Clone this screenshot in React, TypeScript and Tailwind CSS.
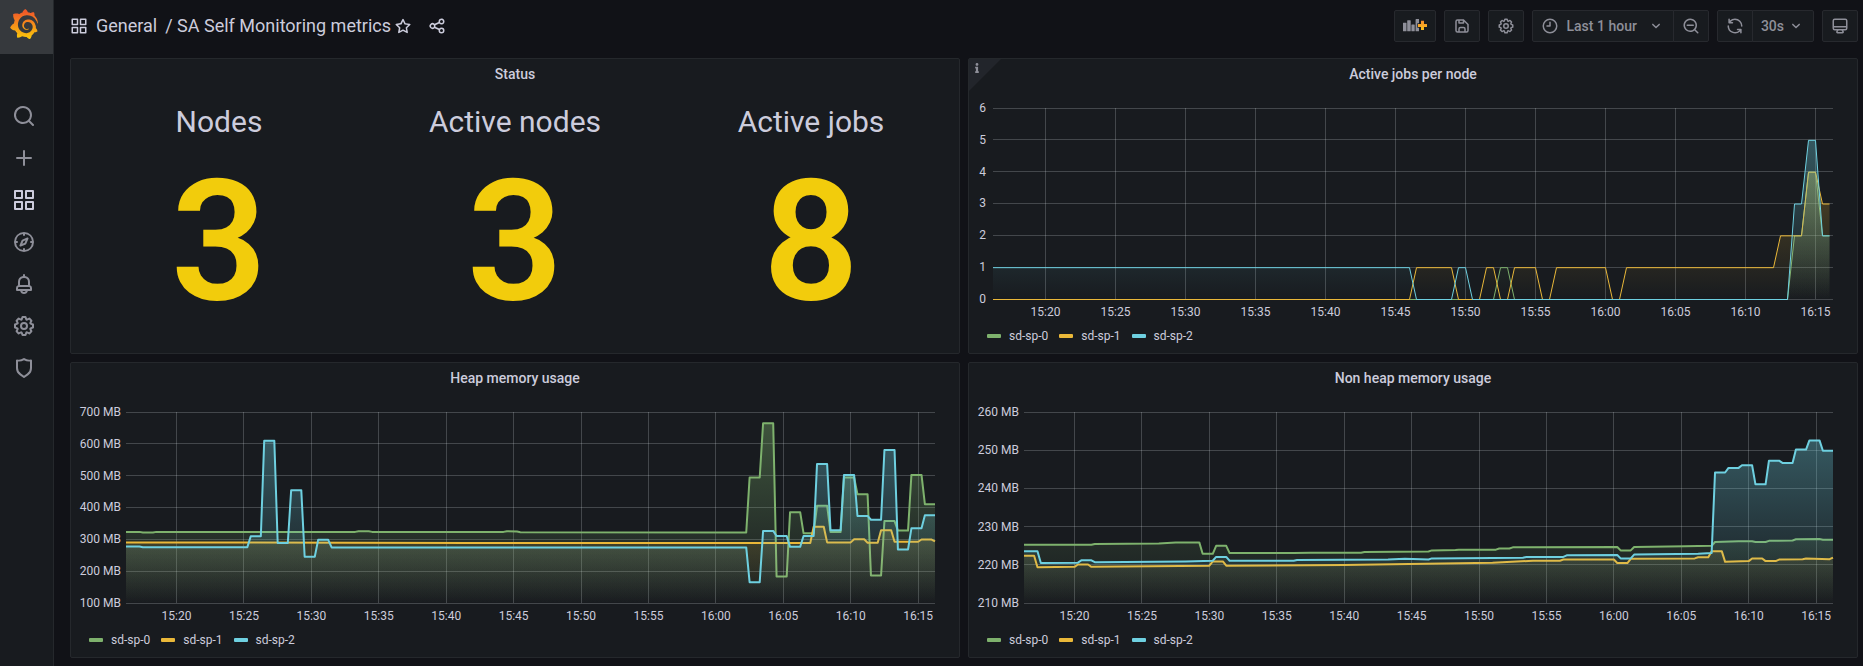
import { SiGrafana } from "react-icons/si";
import { FaInfo } from "react-icons/fa";
import type { ReactNode } from "react";

const ICONS = {
  apps: "M10,13H3a1,1,0,0,0-1,1v7a1,1,0,0,0,1,1h7a1,1,0,0,0,1-1V14A1,1,0,0,0,10,13ZM9,20H4V15H9ZM21,2H14a1,1,0,0,0-1,1v7a1,1,0,0,0,1,1h7a1,1,0,0,0,1-1V3A1,1,0,0,0,21,2ZM20,9H15V4h5Zm1,4H14a1,1,0,0,0-1,1v7a1,1,0,0,0,1,1h7a1,1,0,0,0,1-1V14A1,1,0,0,0,21,13Zm-1,7H15V15h5ZM10,2H3A1,1,0,0,0,2,3v7a1,1,0,0,0,1,1h7a1,1,0,0,0,1-1V3A1,1,0,0,0,10,2ZM9,9H4V4H9Z",
  search:
    "M21.71,20.29,18,16.61A9,9,0,1,0,16.61,18l3.68,3.68a1,1,0,0,0,1.42,0A1,1,0,0,0,21.71,20.29ZM11,18a7,7,0,1,1,7-7A7,7,0,0,1,11,18Z",
  plus: "M19,11H13V5a1,1,0,0,0-2,0v6H5a1,1,0,0,0,0,2h6v6a1,1,0,0,0,2,0V13h6a1,1,0,0,0,0-2Z",
  compass:
    "M12,2A10,10,0,1,0,22,12,10,10,0,0,0,12,2Zm1,17.93V19a1,1,0,0,0-2,0v.93A8,8,0,0,1,4.07,13H5a1,1,0,0,0,0-2H4.07A8,8,0,0,1,11,4.07V5a1,1,0,0,0,2,0V4.07A8,8,0,0,1,19.93,11H19a1,1,0,0,0,0,2h.93A8,8,0,0,1,13,19.93ZM15.14,7.55l-5,2.12a1,1,0,0,0-.52.52l-2.12,5a1,1,0,0,0,.21,1.1,1,1,0,0,0,.7.3.93.93,0,0,0,.4-.09l5-2.12a1,1,0,0,0,.52-.52l2.12-5a1,1,0,0,0-1.31-1.31Zm-2.49,5.1-2.28,1,1-2.28,2.28-1Z",
  bell: "M18,13.18V10a6,6,0,0,0-5-5.91V3a1,1,0,0,0-2,0V4.09A6,6,0,0,0,6,10v3.18A3,3,0,0,0,4,16v2a1,1,0,0,0,1,1H8.14a4,4,0,0,0,7.72,0H19a1,1,0,0,0,1-1V16A3,3,0,0,0,18,13.18ZM8,10a4,4,0,0,1,8,0v3H8Zm4,10a2,2,0,0,1-1.72-1h3.44A2,2,0,0,1,12,20Zm6-3H6V16a1,1,0,0,1,1-1H17a1,1,0,0,1,1,1Z",
  cog: "M21.32,9.55l-1.89-.63.89-1.78A1,1,0,0,0,20.13,6L18,3.87a1,1,0,0,0-1.15-.19l-1.78.89-.63-1.89A1,1,0,0,0,13.5,2h-3a1,1,0,0,0-.95.68L8.92,4.57,7.14,3.68A1,1,0,0,0,6,3.87L3.87,6a1,1,0,0,0-.19,1.15l.89,1.78-1.89.63A1,1,0,0,0,2,10.5v3a1,1,0,0,0,.68.95l1.89.63-.89,1.78A1,1,0,0,0,3.87,18L6,20.13a1,1,0,0,0,1.15.19l1.78-.89.63,1.89a1,1,0,0,0,.95.68h3a1,1,0,0,0,.95-.68l.63-1.89,1.78.89A1,1,0,0,0,18,20.13L20.13,18a1,1,0,0,0,.19-1.15l-.89-1.78,1.89-.63A1,1,0,0,0,22,13.5v-3A1,1,0,0,0,21.32,9.55ZM20,12.78l-1.2.4A2,2,0,0,0,17.64,16l.57,1.14-1.1,1.1L16,17.64a2,2,0,0,0-2.79,1.16l-.4,1.2H11.22l-.4-1.2A2,2,0,0,0,8,17.64l-1.14.57-1.1-1.1L6.36,16A2,2,0,0,0,5.2,13.18L4,12.78V11.22l1.2-.4A2,2,0,0,0,6.36,8L5.79,6.89l1.1-1.1L8,6.36A2,2,0,0,0,10.82,5.2l.4-1.2h1.56l.4,1.2A2,2,0,0,0,16,6.36l1.14-.57,1.1,1.1L17.64,8a2,2,0,0,0,1.16,2.79l1.2.4ZM12,8a4,4,0,1,0,4,4A4,4,0,0,0,12,8Zm0,6a2,2,0,1,1,2-2A2,2,0,0,1,12,14Z",
  shield:
    "M19.63,3.65a1,1,0,0,0-.84-.2,8,8,0,0,1-6.22-1.27,1,1,0,0,0-1.14,0A8,8,0,0,1,5.21,3.45a1,1,0,0,0-.84.2A1,1,0,0,0,4,4.43v7.45a9,9,0,0,0,3.77,7.33l3.65,2.6a1,1,0,0,0,1.16,0l3.65-2.6A9,9,0,0,0,20,11.88V4.43A1,1,0,0,0,19.63,3.65ZM18,11.88a7,7,0,0,1-2.93,5.7L12,19.77,8.93,17.58A7,7,0,0,1,6,11.88V5.58a10,10,0,0,0,6-1.39,10,10,0,0,0,6,1.39Z",
  star: "M22,9.67A1,1,0,0,0,21.14,9l-5.69-.83L12.9,3a1,1,0,0,0-1.8,0L8.55,8.16,2.86,9a1,1,0,0,0-.81.68,1,1,0,0,0,.25,1l4.13,4-1,5.68A1,1,0,0,0,6.9,21.44L12,18.77l5.1,2.67a.93.93,0,0,0,.46.12,1,1,0,0,0,.59-.19,1,1,0,0,0,.4-1l-1-5.68,4.13-4A1,1,0,0,0,22,9.67Zm-6.15,4a1,1,0,0,0-.29.88l.72,4.2-3.76-2a1.06,1.06,0,0,0-.94,0l-3.76,2,.72-4.2a1,1,0,0,0-.29-.88l-3-3,4.21-.61a1,1,0,0,0,.76-.55L12,5.7l1.88,3.82a1,1,0,0,0,.76.55l4.21.61Z",
  share:
    "M18,14a4,4,0,0,0-3.08,1.48l-5.1-2.35a3.64,3.64,0,0,0,0-2.26l5.1-2.35A4,4,0,1,0,14,6a4.17,4.17,0,0,0,.07.71L8.79,9.14a4,4,0,1,0,0,5.72l5.28,2.43A4.17,4.17,0,0,0,14,18a4,4,0,1,0,4-4ZM18,4a2,2,0,1,1-2,2A2,2,0,0,1,18,4ZM6,14a2,2,0,1,1,2-2A2,2,0,0,1,6,14Zm12,6a2,2,0,1,1,2-2A2,2,0,0,1,18,20Z",
  save: "M20.71,9.29l-6-6a1,1,0,0,0-.32-.21A1.09,1.09,0,0,0,14,3H6A3,3,0,0,0,3,6V18a3,3,0,0,0,3,3H18a3,3,0,0,0,3-3V10A1,1,0,0,0,20.71,9.29ZM9,5h4V7H9Zm6,14H9V16a1,1,0,0,1,1-1h4a1,1,0,0,1,1,1Zm4-1a1,1,0,0,1-1,1H17V16a3,3,0,0,0-3-3H10a3,3,0,0,0-3,3v3H6a1,1,0,0,1-1-1V6A1,1,0,0,1,6,5H7V8A1,1,0,0,0,8,9h6a1,1,0,0,0,1-1V6.41l4,4Z",
  clock:
    "M12,2A10,10,0,1,0,22,12,10,10,0,0,0,12,2Zm0,18a8,8,0,1,1,8-8A8,8,0,0,1,12,20ZM12,6a1,1,0,0,0-1,1v4H8a1,1,0,0,0,0,2h4a1,1,0,0,0,1-1V7A1,1,0,0,0,12,6Z",
  angleDown:
    "M17,9.17a1,1,0,0,0-1.41,0L12,12.71,8.46,9.17a1,1,0,0,0-1.41,0,1,1,0,0,0,0,1.42l4.24,4.24a1,1,0,0,0,1.42,0L17,10.59A1,1,0,0,0,17,9.17Z",
  searchMinus:
    "M21.71,20.29,18,16.61A9,9,0,1,0,16.61,18l3.68,3.68a1,1,0,0,0,1.42,0A1,1,0,0,0,21.71,20.29ZM11,18a7,7,0,1,1,7-7A7,7,0,0,1,11,18Zm4-8H7a1,1,0,0,0,0,2h8a1,1,0,0,0,0-2Z",
  sync: "M19.91,15.51H15.38a1,1,0,0,0,0,2h2.4A8,8,0,0,1,4,12a1,1,0,0,0-2,0,10,10,0,0,0,16.88,7.23V21a1,1,0,0,0,2,0V16.5A1,1,0,0,0,19.91,15.51ZM12,2A10,10,0,0,0,5.12,4.77V3a1,1,0,0,0-2,0V7.5a1,1,0,0,0,1,1h4.5a1,1,0,0,0,0-2H6.22A8,8,0,0,1,20,12a1,1,0,0,0,2,0A10,10,0,0,0,12,2Z",
  monitor:
    "M19,2H5A3,3,0,0,0,2,5V15a3,3,0,0,0,3,3H7.64l-.58,1a2,2,0,0,0,0,2,2,2,0,0,0,1.75,1h6.46A2,2,0,0,0,17,21a2,2,0,0,0,0-2l-.59-1H19a3,3,0,0,0,3-3V5A3,3,0,0,0,19,2ZM8.77,20,10,18H14l1.2,2ZM20,15a1,1,0,0,1-1,1H5a1,1,0,0,1-1-1V14H20Zm0-3H4V5A1,1,0,0,1,5,4H19a1,1,0,0,1,1,1Z",
};

type IconName = keyof typeof ICONS;

function Icon({ name, className }: { name: IconName; className: string }) {
  return (
    <svg viewBox="0 0 24 24" className={className} fill="currentColor" aria-hidden="true">
      <path d={ICONS[name]} />
    </svg>
  );
}

function AddPanelIcon() {
  return (
    <svg viewBox="0 0 24 16" className="h-4 w-6 shrink-0" aria-hidden="true">
      <defs>
        <linearGradient id="add-plus" x1="0" y1="0" x2="0" y2="1">
          <stop offset="0" stopColor="#f58b2e" />
          <stop offset="1" stopColor="#fcc11a" />
        </linearGradient>
      </defs>
      <g fill="currentColor">
        <rect x="0" y="4.700" width="3.500" height="8.600" rx="0.4" />
        <rect x="4.200" y="2.300" width="3.500" height="11" rx="0.4" />
        <rect x="8.400" y="6.500" width="3.300" height="6.800" rx="0.4" />
        <path d="M12.600 1.400Q12.600 1 13 1H16V5.200H14.300V9.800H16V13.300H13Q12.600 13.300 12.600 12.900Z" />
      </g>
      <path d="M18 2.800h3v3.100h3v3h-3V12h-3V8.900h-3v-3h3Z" fill="url(#add-plus)" />
    </svg>
  );
}

/* ---------- Sidebar ---------- */

const NAV: { label: string; icon: IconName; active?: boolean }[] = [
  { label: "Search", icon: "search" },
  { label: "Create", icon: "plus" },
  { label: "Dashboards", icon: "apps", active: true },
  { label: "Explore", icon: "compass" },
  { label: "Alerting", icon: "bell" },
  { label: "Configuration", icon: "cog" },
  { label: "Server Admin", icon: "shield" },
];

function Sidebar() {
  return (
    <nav aria-label="Main" className="w-[54px] shrink-0 border-r border-[#25282c] bg-[#181b1f]">
      <a href="#home" aria-label="Home" className="flex h-[54px] items-center bg-[#36393d] pb-[6px] pl-[9px]">
        <svg className="h-0 w-0" aria-hidden="true">
          <defs>
            <linearGradient id="logo-fill" x1="0" y1="0" x2="0" y2="1">
              <stop offset="0.1" stopColor="#f05a28" />
              <stop offset="1" stopColor="#fbca0a" />
            </linearGradient>
          </defs>
        </svg>
        <SiGrafana size={30} fill="url(#logo-fill)" aria-hidden="true" />
      </a>
      <ul className="mt-[41px]">
        {NAV.map((item) => (
          <li key={item.label}>
            <a
              href={`#${item.icon}`}
              aria-label={item.label}
              className={`flex h-[42px] items-center pl-3 ${item.active ? "text-[#ccccdc]" : "text-[#8e8f99]"}`}
            >
              <Icon name={item.icon} className="size-6" />
            </a>
          </li>
        ))}
      </ul>
    </nav>
  );
}

/* ---------- Top bar ---------- */

function ToolButton({ label, className = "rounded-xs", children }: { label: string; className?: string; children: ReactNode }) {
  return (
    <button
      type="button"
      aria-label={label}
      className={`flex h-8 items-center border border-[#27292e] bg-[#181b1f] px-2 text-sm font-medium whitespace-nowrap text-[#8e8f99] ${className}`}
    >
      {children}
    </button>
  );
}

function TopBar() {
  return (
    <header className="flex items-center justify-between py-[10px]">
      <div className="flex h-8 items-center text-lg text-[#ccccdc]">
        <Icon name="apps" className="size-[18px] shrink-0" />
        <h1 className="flex items-center gap-2 pl-2 whitespace-nowrap">
          <a href="#general">General</a>
          <a href="#dashboard">/ SA Self Monitoring metrics</a>
        </h1>
        <button type="button" aria-label="Mark as favorite" className="ml-[3px]">
          <Icon name="star" className="size-[18px]" />
        </button>
        <button type="button" aria-label="Share dashboard" className="ml-4">
          <Icon name="share" className="size-[18px]" />
        </button>
      </div>
      <div className="flex items-center gap-2">
        <ToolButton label="Add panel">
          <AddPanelIcon />
        </ToolButton>
        <ToolButton label="Save dashboard">
          <Icon name="save" className="size-[18px]" />
        </ToolButton>
        <ToolButton label="Dashboard settings">
          <Icon name="cog" className="size-[18px]" />
        </ToolButton>
        <div className="flex">
          <ToolButton label="Time range: Last 1 hour" className="gap-2 rounded-l-xs">
            <Icon name="clock" className="size-[18px]" />
            <span className="pr-[2px]">Last 1 hour</span>
            <Icon name="angleDown" className="size-[18px]" />
          </ToolButton>
          <ToolButton label="Zoom out" className="-ml-px rounded-r-xs">
            <Icon name="searchMinus" className="size-[18px]" />
          </ToolButton>
        </div>
        <div className="flex">
          <ToolButton label="Refresh" className="rounded-l-xs">
            <Icon name="sync" className="size-[18px]" />
          </ToolButton>
          <ToolButton label="Refresh every 30s" className="-ml-px gap-[3px] rounded-r-xs">
            <span>30s</span>
            <Icon name="angleDown" className="size-[18px]" />
          </ToolButton>
        </div>
        <ToolButton label="Cycle view mode">
          <Icon name="monitor" className="size-[18px]" />
        </ToolButton>
      </div>
    </header>
  );
}

/* ---------- Panels ---------- */

function Panel({ title, info, children }: { title: string; info?: boolean; children: ReactNode }) {
  return (
    <section className="relative flex min-h-[296px] min-w-0 flex-col rounded-xs border border-[#25282c] bg-[#181b1f]">
      {info && (
        <button type="button" aria-label="Panel description" className="absolute top-0 left-0 size-8 text-[#8e8f99]">
          <svg viewBox="0 0 32 32" className="absolute inset-0 size-8" aria-hidden="true">
            <path d="M0 0H32L0 32Z" fill="#22252b" />
          </svg>
          <FaInfo size={10} className="absolute top-1 left-[3px]" aria-hidden="true" />
        </button>
      )}
      <h2 className="pb-[2px] text-center text-sm leading-[30px] font-medium text-[#ccccdc]">{title}</h2>
      {children}
    </section>
  );
}

const STATS = [
  { label: "Nodes", value: "3" },
  { label: "Active nodes", value: "3" },
  { label: "Active jobs", value: "8" },
];

function StatusPanel() {
  return (
    <Panel title="Status">
      <dl className="grid grid-cols-3 pt-[13px] text-center">
        {STATS.map((stat) => (
          <div key={stat.label}>
            <dt className="text-3xl text-[#ccccdc]">{stat.label}</dt>
            <dd className="mt-[18px] text-[168px] leading-none font-semibold text-[#f2cc0c]">{stat.value}</dd>
          </div>
        ))}
      </dl>
    </Panel>
  );
}

/* ---------- Charts ---------- */

type Point = [minute: number, value: number];
type Series = { name: string; color: string; points: Point[] };

const GREEN = "#7eb26d";
const YELLOW = "#eab839";
const CYAN = "#6ed0e0";

/* Minutes after 15:00 covered by every chart. */
const START = 16.25;
const SPAN = 60;
const PLOT_HEIGHT = 191;

const TIME_TICKS = [20, 25, 30, 35, 40, 45, 50, 55, 60, 65, 70, 75];

function timeLabel(minute: number) {
  return `${15 + Math.floor(minute / 60)}:${String(minute % 60).padStart(2, "0")}`;
}

type ChartProps = {
  id: string;
  title: string;
  info?: boolean;
  min: number;
  max: number;
  step: number;
  unit?: string;
  axisClass: string;
  lineWidth: number;
  series: Series[];
};

function ChartPanel({ id, title, info, min, max, step, unit = "", axisClass, lineWidth, series }: ChartProps) {
  const count = Math.round((max - min) / step);
  const ticks = Array.from({ length: count + 1 }, (_, i) => max - i * step);
  const toPath = (points: Point[]) =>
    points
      .map(([m, v]) => `${(m - START).toFixed(2)},${(((max - v) / (max - min)) * PLOT_HEIGHT).toFixed(2)}`)
      .join("L");

  return (
    <Panel title={title} info={info}>
      <div className="flex h-[231px] pt-[17px] pr-6">
        <div className={`flex h-[191px] shrink-0 flex-col justify-between text-right text-xs text-[#ccccdc] ${axisClass}`}>
          {ticks.map((tick) => (
            <span key={tick} className="-my-2 whitespace-nowrap">
              {tick}
              {unit}
            </span>
          ))}
        </div>
        <svg className="h-[191px] min-w-0 flex-1 overflow-visible" role="img" aria-label={title}>
          <defs>
            {series.map((s, i) => (
              <linearGradient
                key={s.name}
                id={`${id}-${i}`}
                gradientUnits="userSpaceOnUse"
                x1="0"
                y1="0"
                x2="0"
                y2={PLOT_HEIGHT}
              >
                <stop offset="0" stopColor={s.color} stopOpacity="0.4" />
                <stop offset="1" stopColor={s.color} stopOpacity="0" />
              </linearGradient>
            ))}
          </defs>
          <g stroke="#f0faff" strokeOpacity="0.2" shapeRendering="crispEdges">
            {ticks.map((tick, i) => {
              const y = Math.floor((i / count) * PLOT_HEIGHT) + 0.5;
              return <line key={tick} x1="0" x2="100%" y1={y} y2={y} />;
            })}
            {TIME_TICKS.map((m) => {
              const x = `${((m - START) / SPAN) * 100}%`;
              return <line key={m} x1={x} x2={x} y1="0" y2={PLOT_HEIGHT} />;
            })}
          </g>
          <svg
            y="0.5"
            width="100%"
            height={PLOT_HEIGHT}
            viewBox={`0 0 ${SPAN} ${PLOT_HEIGHT}`}
            preserveAspectRatio="none"
            overflow="visible"
          >
            {series.map((s, i) => {
              const d = toPath(s.points);
              const end = (s.points[s.points.length - 1][0] - START).toFixed(2);
              return (
                <g key={s.name}>
                  <path d={`M0,${PLOT_HEIGHT}L${d}L${end},${PLOT_HEIGHT}Z`} fill={`url(#${id}-${i})`} />
                  <path
                    d={`M${d}`}
                    fill="none"
                    stroke={s.color}
                    strokeWidth={lineWidth}
                    strokeLinejoin="round"
                    vectorEffect="non-scaling-stroke"
                  />
                </g>
              );
            })}
          </svg>
          <g fill="#ccccdc" textAnchor="middle" className="text-xs">
            {TIME_TICKS.map((m) => (
              <text key={m} x={`${((m - START) / SPAN) * 100}%`} y="208">
                {timeLabel(m)}
              </text>
            ))}
          </g>
        </svg>
      </div>
      <ul className="flex h-7 items-center gap-[11px] pl-[18px] text-xs text-[#ccccdc]">
        {series.map((s) => (
          <li key={s.name}>
            <button type="button" className="flex items-center gap-2">
              <span className="h-1 w-[14px] rounded-[1px]" style={{ backgroundColor: s.color }} />
              {s.name}
            </button>
          </li>
        ))}
      </ul>
    </Panel>
  );
}

const JOBS: Series[] = [
  {
    name: "sd-sp-0",
    color: GREEN,
    points: [
      [16.25, 0], [52, 0], [52.5, 1], [53, 1], [53.5, 0], [73, 0], [73.5, 2], [74, 2], [74.5, 4], [75, 4],
      [75.5, 2], [76, 2],
    ],
  },
  {
    name: "sd-sp-1",
    color: YELLOW,
    points: [
      [16.25, 0], [46, 0], [46.5, 1], [49, 1], [49.5, 0], [51, 0], [51.5, 1], [52, 1], [52.5, 0], [53, 0],
      [53.5, 1], [55, 1], [55.5, 0], [56, 0], [56.5, 1], [60, 1], [60.5, 0], [61, 0], [61.5, 1], [72, 1],
      [72.5, 2], [74, 2], [74.5, 4], [75, 4], [75.5, 3], [76, 3],
    ],
  },
  {
    name: "sd-sp-2",
    color: CYAN,
    points: [
      [16.25, 1], [46, 1], [46.5, 0], [49, 0], [49.5, 1], [50, 1], [50.5, 0], [73, 0], [73.5, 3], [74, 3],
      [74.5, 5], [75, 5], [75.5, 2], [76, 2],
    ],
  },
];

const HEAP: Series[] = [
  {
    name: "sd-sp-0",
    color: GREEN,
    points: [
      [16.25, 325], [17.25, 325], [17.5, 323], [18.25, 323], [18.5, 325], [33.25, 325], [33.5, 327], [34.25, 327],
      [34.5, 325], [44.25, 325], [44.5, 327], [45.25, 326], [45.5, 324], [62.25, 323], [62.5, 496], [63.25, 496],
      [63.5, 666], [64.25, 666], [64.5, 185], [65.25, 185], [65.5, 387], [66.25, 387], [66.5, 321], [67.25, 321],
      [67.5, 407], [68.25, 407], [68.5, 325], [69.25, 325], [69.5, 496], [70.25, 496], [70.5, 443], [71.25, 443],
      [71.5, 188], [72.25, 188], [72.5, 359], [73.25, 359], [73.5, 329], [74.25, 329], [74.5, 504], [75.25, 504],
      [75.5, 412], [76.25, 412],
    ],
  },
  {
    name: "sd-sp-1",
    color: YELLOW,
    points: [
      [16.25, 292], [33, 291], [42, 290], [58, 290], [67, 290], [67.25, 341], [68, 341], [68.25, 292], [70, 292],
      [70.25, 302], [71, 302], [71.25, 291], [72, 291], [72.25, 330], [73, 330], [73.25, 294], [75, 294],
      [75.25, 301], [76, 301], [76.25, 295],
    ],
  },
  {
    name: "sd-sp-2",
    color: CYAN,
    points: [
      [16.25, 279], [17.25, 279], [17.5, 277], [25.25, 277], [25.5, 311], [26.25, 311], [26.5, 611], [27.25, 611],
      [27.5, 290], [28.25, 290], [28.5, 456], [29.25, 456], [29.5, 247], [30.25, 247], [30.5, 300], [31.25, 300],
      [31.5, 276], [62.25, 276], [62.5, 167], [63.25, 167], [63.5, 328], [64.25, 328], [64.5, 312], [65.25, 312],
      [65.5, 278], [66.25, 278], [66.5, 312], [67.25, 312], [67.5, 538], [68.25, 538], [68.5, 330], [69.25, 330],
      [69.5, 504], [70.25, 504], [70.5, 375], [71.25, 375], [71.5, 363], [72.25, 363], [72.5, 582], [73.25, 582],
      [73.5, 270], [74.25, 270], [74.5, 336], [75.25, 336], [75.5, 377], [76.25, 377],
    ],
  },
];

const NON_HEAP: Series[] = [
  {
    name: "sd-sp-0",
    color: GREEN,
    points: [
      [16.25, 225.4], [21.25, 225.4], [21.5, 225.6], [26.25, 225.7], [27.5, 226], [29.25, 226], [29.5, 223],
      [30.25, 223], [30.5, 225.1], [31.25, 225.1], [31.5, 223.2], [36.25, 223.2], [37.5, 223.3], [41.25, 223.3],
      [41.5, 223.5], [46.25, 223.6], [46.5, 223.9], [48.25, 224], [48.5, 224.1], [51.25, 224.1], [51.5, 224.4],
      [52.25, 224.4], [52.5, 224.7], [60.25, 224.8], [60.5, 223.9], [61.25, 223.9], [61.5, 224.8], [65.25, 225],
      [67.25, 225.1], [67.5, 226.1], [69.25, 226.3], [70.25, 226.3], [70.5, 226.1], [71.25, 226.1], [71.5, 226.4],
      [73.25, 226.5], [73.5, 226.8], [75.25, 226.9], [75.5, 226.7], [76.25, 226.7],
    ],
  },
  {
    name: "sd-sp-1",
    color: YELLOW,
    points: [
      [16.25, 222.5], [17, 222.5], [17.25, 219.5], [20, 219.6], [20.25, 220.2], [21, 220.2], [21.25, 219.6],
      [30, 219.9], [30.25, 221], [31, 221], [31.25, 219.9], [40, 220.1], [46, 220.4], [51, 220.7], [54, 221.2],
      [56, 221.2], [56.25, 221.5], [60, 221.5], [60.25, 220.6], [61, 220.6], [61.25, 221.7], [66, 221.8],
      [66.25, 222.1], [67, 222.1], [67.25, 223.7], [68, 223.7], [68.25, 220.9], [70, 221.1], [70.25, 221.8],
      [71, 221.8], [71.25, 221.1], [72, 221.1], [72.25, 221.5], [74, 221.6], [74.25, 221.8], [76, 221.6],
      [76.25, 222],
    ],
  },
  {
    name: "sd-sp-2",
    color: CYAN,
    points: [
      [16.25, 223.7], [17.25, 223.7], [17.5, 220.6], [20.25, 220.7], [20.5, 221.3], [21.25, 221.3], [21.5, 220.8],
      [28.25, 221], [30.25, 221.2], [30.5, 222.2], [31.25, 222.2], [31.5, 221.2], [36.25, 221.2], [36.5, 221.4],
      [43.25, 221.5], [44.5, 221.7], [46.25, 221.5], [46.5, 221.8], [53.25, 222], [53.5, 222.2], [56.25, 222.2],
      [56.5, 222.6], [60.25, 222.7], [60.5, 221.8], [61.25, 221.8], [61.5, 222.8], [66.25, 223], [67.25, 223.2],
      [67.5, 244.3], [68.25, 244.3], [68.5, 245.5], [69.25, 245.5], [69.5, 246.2], [70.25, 246.2], [70.5, 241.2],
      [71.25, 241.2], [71.5, 247.4], [72.25, 247.4], [72.5, 246.8], [73.25, 246.8], [73.5, 250.3], [74.25, 250.3],
      [74.5, 252.7], [75.25, 252.7], [75.5, 250], [76.25, 250],
    ],
  },
];

export default function App() {
  return (
    <div className="flex min-h-screen bg-[#111217] font-['Roboto',sans-serif]">
      <Sidebar />
      <div className="min-w-0 flex-1 pr-[5px] pb-2 pl-4">
        <TopBar />
        <main className="grid grid-cols-2 gap-2 pt-[6px]">
          <StatusPanel />
          <ChartPanel
            id="jobs"
            title="Active jobs per node"
            info
            min={0}
            max={6}
            step={1}
            axisClass="w-6 pr-[7px]"
            lineWidth={1}
            series={JOBS}
          />
          <ChartPanel
            id="heap"
            title="Heap memory usage"
            min={100}
            max={700}
            step={100}
            unit=" MB"
            axisClass="w-[55px] pr-[5px]"
            lineWidth={2}
            series={HEAP}
          />
          <ChartPanel
            id="non-heap"
            title="Non heap memory usage"
            min={210}
            max={260}
            step={10}
            unit=" MB"
            axisClass="w-[55px] pr-[5px]"
            lineWidth={2}
            series={NON_HEAP}
          />
        </main>
      </div>
    </div>
  );
}
